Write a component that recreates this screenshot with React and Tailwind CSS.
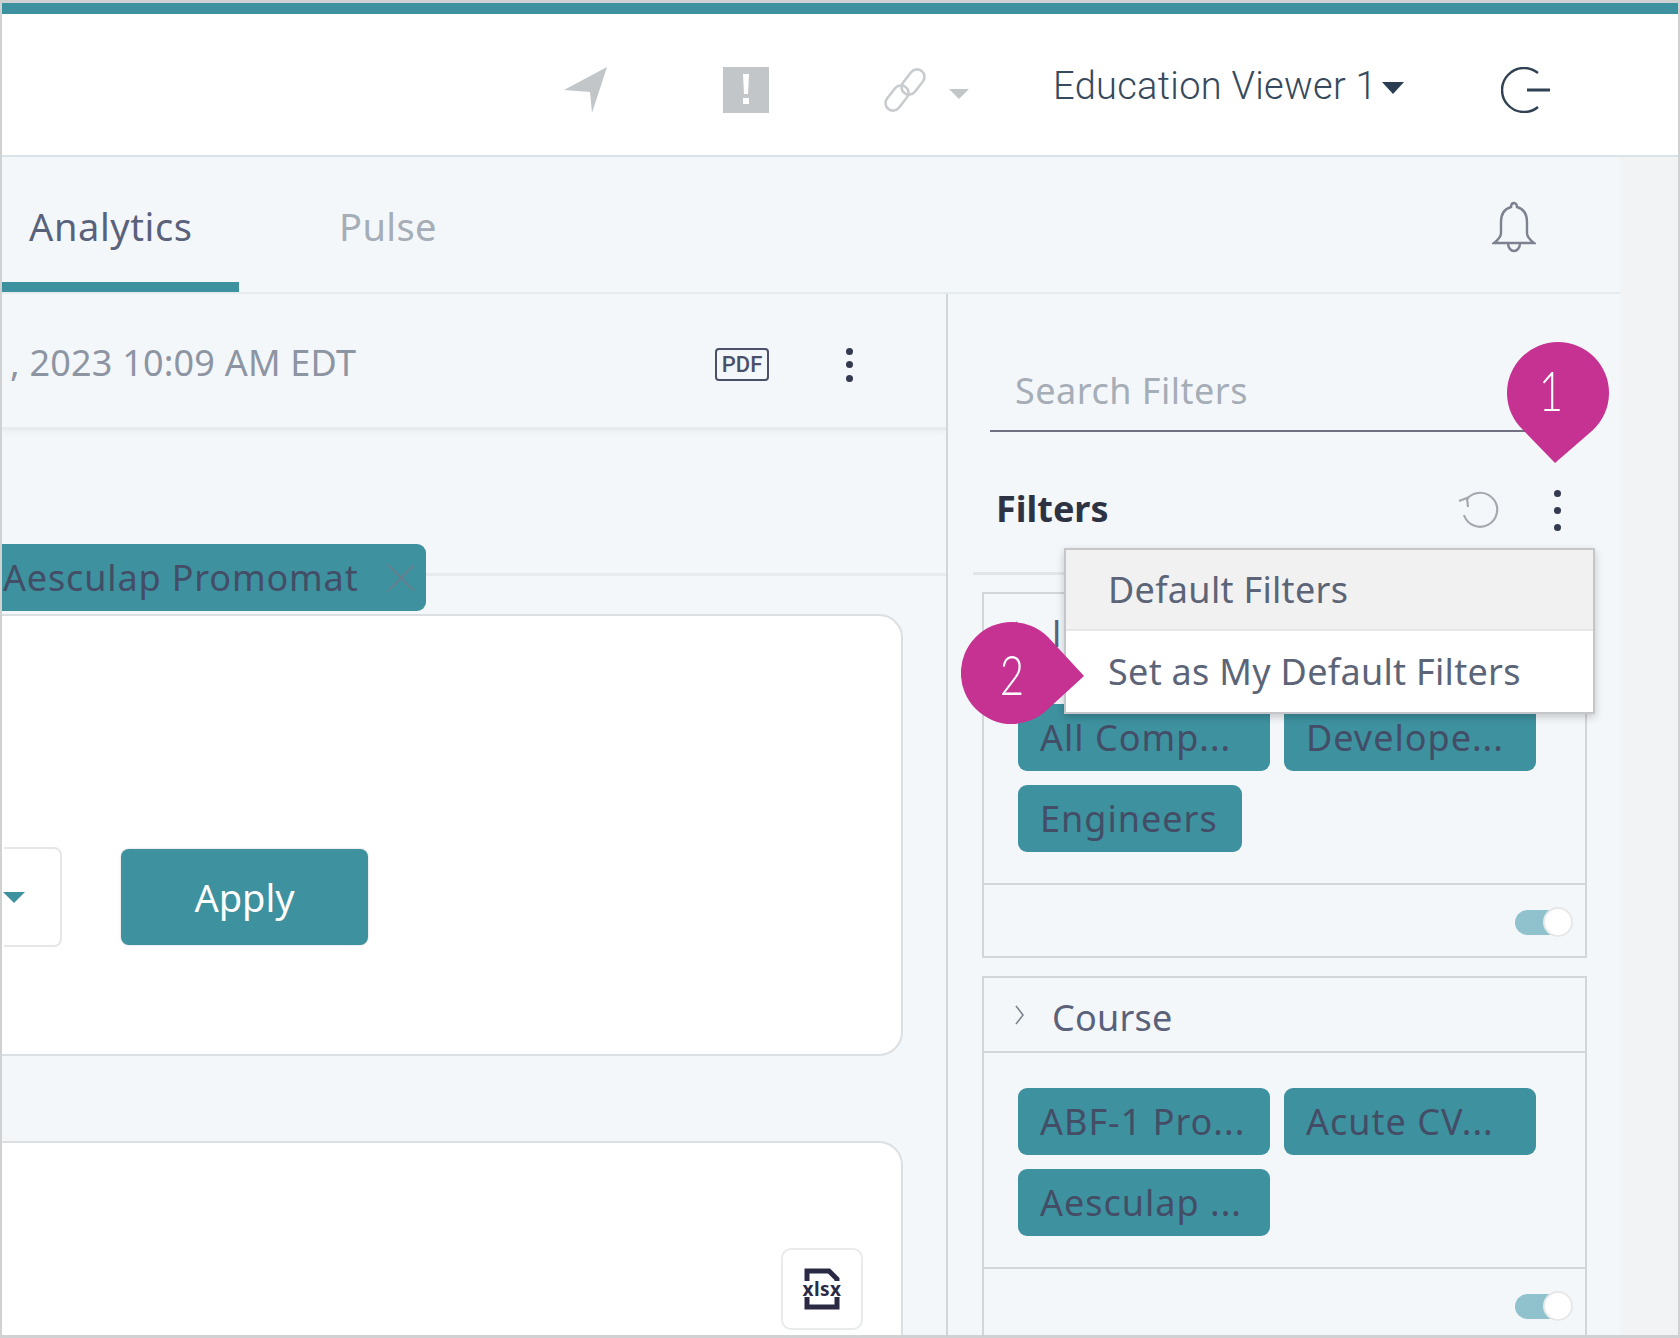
import React from "react";

const Chip = ({ children, className = "w-[252px]" }) => (
    <div className={`${className} h-[67px] rounded-[9px] bg-[#3e919f] pl-[22px] flex items-center text-[36px] text-[#434d66] tracking-[1px] whitespace-nowrap`}>
        {children}
    </div>
);

const Toggle = () => (
    <div className="relative w-[58px] h-[30px]">
        <div className="absolute left-0 top-[3px] w-[50px] h-[25px] rounded-full bg-[#8fc2cc]" />
        <div className="absolute right-0 top-0 w-[30px] h-[30px] rounded-full bg-white border-2 border-[#e6e8ea]" />
    </div>
);

const FilterBox = ({ title, children, className = "" }) => (
    <div className={`border-2 border-[#d3d5d8] ${className}`}>
        <div className="h-[75px] border-b-2 border-[#d3d5d8] flex items-center pl-[30px] pt-[6px] text-[36px] text-[#59627a] tracking-[0.2px]">
            <svg width="11" height="22" viewBox="0 0 11 22" fill="none" stroke="#7c8290" strokeWidth="1.6" className="mr-[27px] -mt-[6px]">
                <path d="M2 2l7 9-7 9" />
            </svg>
            {title}
        </div>
        <div className="pt-[35px] pb-[31px] pl-[34px] flex flex-wrap gap-x-[14px] gap-y-[14px]">
            {children}
        </div>
        <div className="h-[73px] border-t-2 border-[#d3d5d8] flex items-center justify-end pr-[12px] pt-[2px]">
            <Toggle />
        </div>
    </div>
);

const Kebab = ({ className = "" }) => (
    <div className={`flex flex-col justify-between items-center ${className}`}>
        <div className="w-[7px] h-[7px] rounded-full bg-[#343a50]" />
        <div className="w-[7px] h-[7px] rounded-full bg-[#343a50]" />
        <div className="w-[7px] h-[7px] rounded-full bg-[#343a50]" />
    </div>
);

const App = () => {
    return (
        <div
            className="relative w-[1680px] h-[1338px] overflow-hidden flex flex-col bg-[#f4f7fa] border-t-[3px] border-b-[3px] border-l-2 border-r-2 border-[#cfd1d3]"
            style={{ fontFamily: '"Noto Sans", "Open Sans", sans-serif' }}
        >
            <div className="h-[11px] shrink-0 bg-[#3e919f]" />

            {/* header */}
            <div className="h-[143px] shrink-0 bg-white border-b-2 border-[#dbe3e8] flex items-center justify-end pr-[127px] pt-[10px]">
                <svg width="46" height="46" viewBox="0 0 46 46" className="mr-[114px]">
                    <path d="M44 0L1 23 27 25 29 46z" fill="#c3c6c9" />
                </svg>
                <svg width="46" height="46" viewBox="0 0 46 46" className="mr-[113px]">
                    <path fillRule="evenodd" d="M0 0h46v46H0z M20 7h6l-1 20h-4z M20 31h6v6h-6z" fill="#c3c6c9" />
                </svg>
                <svg width="46" height="46" viewBox="0 0 46 46" fill="none" stroke="#c9cccf" strokeWidth="2.6" className="mr-[21px]">
                    <rect x="-7.5" y="-14" width="15" height="28" rx="7.5" transform="translate(31 15) rotate(38)" />
                    <rect x="-7.5" y="-14" width="15" height="28" rx="7.5" transform="translate(15 31) rotate(38)" />
                </svg>
                <div className="w-0 h-0 border-l-[10px] border-r-[10px] border-t-[10px] border-l-transparent border-r-transparent border-t-[#c3c6c9] mr-[84px] mt-[8px]" />
                <div className="text-[38px] font-light text-[#37495c] -mt-[6px] whitespace-nowrap tracking-[0.3px]" style={{ fontFamily: "Roboto, sans-serif" }}>
                    Education Viewer 1
                </div>
                <div className="w-0 h-0 border-l-[11px] border-r-[11px] border-t-[12px] border-l-transparent border-r-transparent border-t-[#2b3d52] ml-[5px] mr-[97px] -mt-[4px]" />
                <svg width="50" height="46" viewBox="0 0 50 46" fill="none" stroke="#2f4152" strokeWidth="2.4">
                    <path d="M37 6A22 22 0 1 0 37 40" />
                    <path d="M26 23h23" strokeWidth="3" />
                </svg>
            </div>

            {/* main */}
            <div className="flex-1 flex min-h-0">
                <div className="w-[1618px] flex flex-col">
                    {/* tabs */}
                    <div className="h-[137px] shrink-0 flex border-b-2 border-[#e6ebef]">
                        <div className="w-[237px] h-full border-b-[10px] border-[#3e919f] -mb-[1px] pl-[27px] pt-[47px] text-[38px] tracking-[0.6px] text-[#59627a] leading-[44px]">
                            Analytics
                        </div>
                        <div className="ml-[100px] pt-[47px] text-[38px] tracking-[0.4px] text-[#a6adb7] leading-[44px]">Pulse</div>
                        <div className="ml-auto mr-[84px] mt-[44px]">
                            <svg width="44" height="52" viewBox="0 0 44 52" fill="none" stroke="#7d8290" strokeWidth="2.4">
                                <path d="M22 2c-2 0-3 2-3 4-7 2-10 8-10 15v11c0 4-3 7-7 10h40c-4-3-7-6-7-10V21c0-7-3-13-10-15 0-2-1-4-3-4z" />
                                <path d="M16 42c0 5 3 8 6 8s6-3 6-8" />
                            </svg>
                        </div>
                    </div>

                    <div className="flex-1 flex min-h-0">
                        {/* left column */}
                        <div className="w-[946px] shrink-0 border-r-2 border-[#d3d5d8] flex flex-col overflow-hidden">
                            <div className="h-[136px] shrink-0 flex items-center border-b-[3px] border-[#e7ebee] shadow-[0_3px_6px_rgba(0,0,0,0.03)] pr-[93px] pt-[8px]">
                                <div className="text-[36px] text-[#8d95a3] whitespace-nowrap pl-[8px] pb-[4px] tracking-[0.2px]">, 2023 10:09 AM EDT</div>
                                <div
                                    className="ml-auto w-[54px] h-[33px] border-2 border-[#4a5068] rounded-[4px] flex items-center justify-center text-[22px] font-medium text-[#4a5068] mr-[77px]"
                                    style={{ fontFamily: "Roboto, sans-serif" }}
                                >
                                    PDF
                                </div>
                                <Kebab className="h-[34px]" />
                            </div>

                            <div className="h-[181px] shrink-0 flex items-end">
                                <div className="w-[424px] h-[67px] rounded-r-[9px] bg-[#3e919f] flex items-center text-[36px] text-[#434d66] tracking-[0.85px] whitespace-nowrap pl-[1px]">
                                    Aesculap Promomat
                                    <svg width="28" height="28" viewBox="0 0 28 28" fill="none" stroke="#6d7a88" strokeWidth="1.6" className="ml-[28px]">
                                        <path d="M1 1l26 26M27 1L1 27" />
                                    </svg>
                                </div>
                                <div className="flex-1 mb-[35px] border-b-[3px] border-[#e7ebee]" />
                            </div>

                            <div className="h-[442px] shrink-0 mt-[3px] -ml-[30px] mr-[43px] bg-white border-2 border-[#dcdfe1] rounded-[24px] pt-[231px] pl-[30px] flex items-start">
                                <div className="w-[58px] h-[100px] border-2 border-[#e4e6e8] border-l-0 rounded-r-[8px] flex items-center">
                                    <div className="w-0 h-0 border-l-[11px] border-r-[11px] border-t-[11px] border-l-transparent border-r-transparent border-t-[#3e919f] -ml-[1px]" />
                                </div>
                                <div className="ml-[59px] w-[247px] h-[96px] mt-[2px] rounded-[8px] bg-[#3e919f] shadow-[0_0_2px_rgba(0,0,0,0.25)] flex items-center justify-center text-[38px] text-white">
                                    Apply
                                </div>
                            </div>

                            <div className="flex-1 mt-[85px] -ml-[30px] mr-[43px] bg-white border-2 border-b-0 border-[#dcdfe1] rounded-t-[24px] flex justify-end pr-[38px] pt-[105px]">
                                <div className="w-[82px] h-[82px] border-2 border-[#e8eaec] rounded-[10px] flex items-center justify-center relative">
                                    <svg width="36" height="42" viewBox="0 0 36 42" fill="none" stroke="#2a2a45" strokeWidth="5">
                                        <path d="M3 14V3h22l8 8v3M3 29v10h30V29" />
                                    </svg>
                                    <span className="absolute text-[19px] font-bold text-[#2a2a45] tracking-[0.5px] bg-white leading-[16px]">xlsx</span>
                                </div>
                            </div>
                        </div>

                        {/* filters panel */}
                        <div className="flex-1 pl-[34px] pr-[33px] overflow-hidden">
                            <div className="h-[138px] border-b-2 border-[#6f7183] mr-[43px] ml-[8px] pl-[25px] pt-[74px] text-[36px] leading-[46px] text-[#a5adb7] tracking-[0.5px]">
                                Search Filters
                            </div>
                            <div className="h-[143px] border-b-[3px] border-[#e2e5e8] -ml-[9px] -mr-[5px] pl-[23px] pr-[31px] pt-[14px] flex items-center">
                                <div className="text-[36px] font-bold text-[#2e3344]">Filters</div>
                                <svg width="42" height="38" viewBox="0 0 42 38" fill="none" stroke="#a5a9af" strokeWidth="2.2" className="ml-auto mr-[55px]">
                                    <path d="M10 9a17 17 0 1 1-3 16" />
                                    <path d="M2 11l8-3 1 9" />
                                </svg>
                                <Kebab className="h-[41px] mt-[2px]" />
                            </div>
                            <FilterBox title="l" className="mt-[17px] h-[366px]">
                                <Chip>All Comp...</Chip>
                                <Chip>Develope...</Chip>
                                <Chip className="w-[224px]">Engineers</Chip>
                            </FilterBox>
                            <FilterBox title="Course" className="mt-[18px]">
                                <Chip>ABF-1 Pro...</Chip>
                                <Chip>Acute CV...</Chip>
                                <Chip>Aesculap ...</Chip>
                            </FilterBox>
                        </div>
                    </div>
                </div>
                <div className="flex-1 bg-[#f2f3f5]" />
            </div>

            {/* dropdown menu */}
            <div className="absolute left-[1062px] top-[545px] w-[531px] h-[166px] bg-white border-2 border-[#c4c6c9] shadow-[0_3px_8px_rgba(0,0,0,0.2)] text-[36px] text-[#5c6478] tracking-[0.3px]">
                <div className="h-[81px] bg-[#f1f1f1] border-b-2 border-[#e6e6e6] pl-[42px] flex items-center">Default Filters</div>
                <div className="h-[81px] pl-[42px] flex items-center">Set as My Default Filters</div>
            </div>

            {/* callout pins */}
            <div className="absolute left-[1505px] top-[338px] w-[102px] h-[122px] text-white">
                <svg width="102" height="122" viewBox="0 0 102 122" className="absolute inset-0">
                    <path d="M48 122L16 89A51 51 0 1 1 86 89Z" fill="#c63292" />
                </svg>
                <div className="absolute left-[-7px] w-[102px] top-[19px] text-center text-[56px] font-light leading-[60px] scale-x-75" style={{ fontFamily: "Lato, sans-serif" }}>1</div>
            </div>
            <div className="absolute left-[959px] top-[619px] w-[123px] h-[102px] text-white">
                <svg width="123" height="102" viewBox="0 0 123 102" className="absolute inset-0">
                    <path d="M123 54L87 87A51 51 0 1 1 87 15Z" fill="#c63292" />
                </svg>
                <div className="absolute left-0 w-[102px] top-[22px] text-center text-[56px] font-light leading-[60px] scale-x-75" style={{ fontFamily: "Lato, sans-serif" }}>2</div>
            </div>
        </div>
    );
};

export default App;
